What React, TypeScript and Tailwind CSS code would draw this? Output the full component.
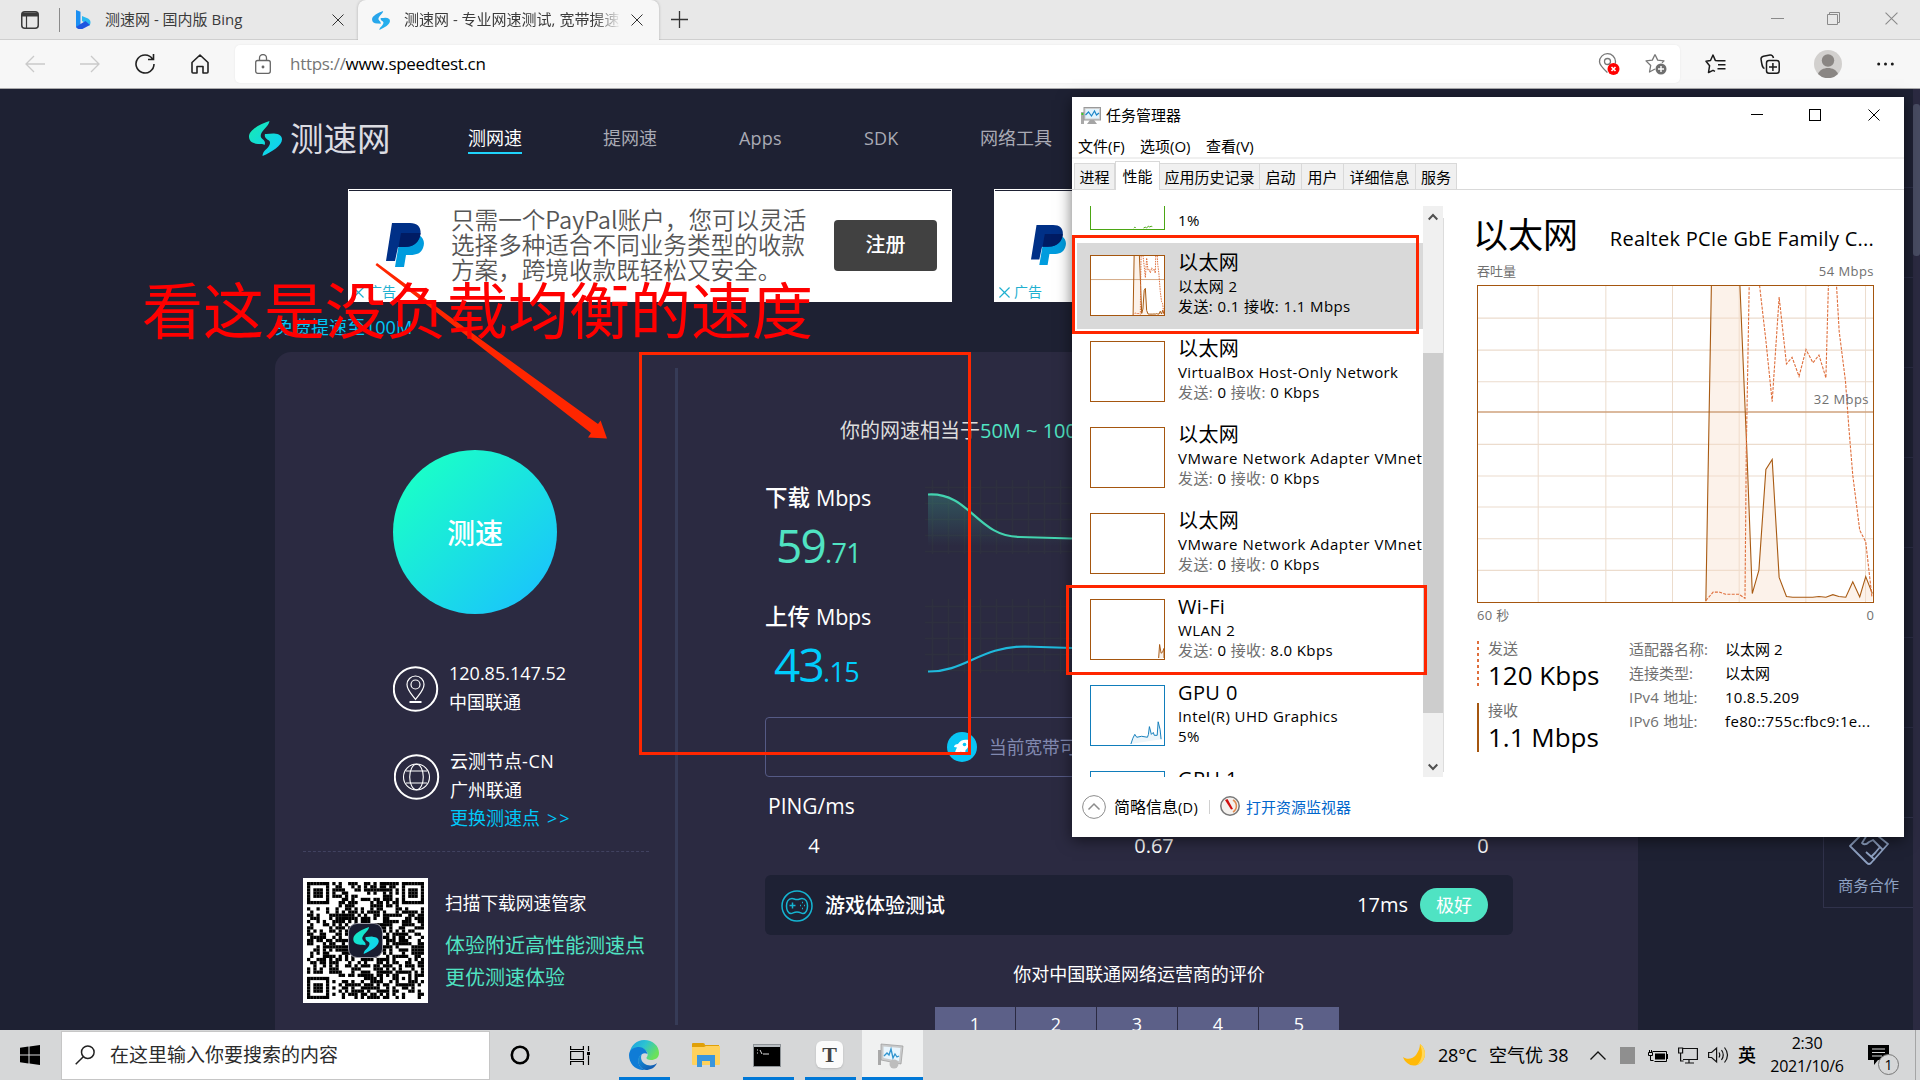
import React from "react";

/* ---------- shared drawings ---------- */

function SpeedLogo({ className, from, to, id }: { className: string; from: string; to: string; id: string }) {
  return (
    <svg className={className} viewBox="0 0 33 35">
      <defs>
        <linearGradient id={id} x1="0" y1="0" x2="1" y2="1">
          <stop offset="0" stopColor={from} />
          <stop offset="1" stopColor={to} />
        </linearGradient>
      </defs>
      <path
        fill={`url(#${id})`}
        d="M20.500 0C11 3 0 9 0 15.500c0 5 4 7 9 7.500 4 .4 5.500 0 6.500 1 1-2 .5-4-2-6-3-2.500-2-5.500 1.500-9.500C18 5 20 3.500 20.500 0zM16 13c-1 3 1 5 4 6.500 2 1.500 1 5-2 8-3 2.500-4.500 4.500-4.500 7.500C23 31 33 24.500 33 18.500c0-4-3-5.500-8-6-3-.2-6 .8-9 .5z"
      />
    </svg>
  );
}

function PayPal({ className }: { className: string }) {
  return (
    <svg className={className} viewBox="0 0 38 44" preserveAspectRatio="none">
      <path fill="#009cde" d="M33 12c5 3 6 8 4 13-2 5-6 7-13 7h-4l-2 12H9l4-24z" />
      <path fill="#003087" d="M6 0h18c9 0 12 6 10 13-2 8-8 11-16 11h-6l-3 14H0z" />
      <path fill="#001c64" d="M15 10h19.500c-.5 8-6 14-16 14h-6z" />
    </svg>
  );
}

function Cross({ className, w = 1 }: { className: string; w?: number }) {
  return (
    <svg className={className} viewBox="0 0 12 12" fill="none" stroke="currentColor" strokeWidth={w}>
      <path d="M.5.5l11 11M11.500.5l-11 11" />
    </svg>
  );
}

function MonitorIcon({ className }: { className: string }) {
  return (
    <svg className={className} viewBox="0 0 20 17">
      <rect x="0" y="5" width="3" height="12" fill="#a9a9a9" />
      <rect x="0.500" y="6" width="2" height="2" fill="#3ad01e" />
      <rect x="3" y="0.500" width="16.500" height="12.500" fill="#cfcfcf" stroke="#9a9a9a" />
      <rect x="4.500" y="2" width="13.500" height="9.500" fill="#e3f4fd" />
      <path d="M4.500 8l3-3 3 4 3-5 2 4 2.500-2" fill="none" stroke="#1c86c8" strokeWidth="1.200" />
      <path d="M9 13h4l3 4H6z" fill="#a5a5a5" />
    </svg>
  );
}

/* ---------- browser chrome ---------- */

function TabStrip() {
  return (
    <div className="flex h-10 shrink-0 items-stretch bg-[#e8e8e8] text-[15px] text-[#3b3b3b]">
      <div className="flex w-[358px] items-center border-b border-[#cfcfcf]">
        <svg className="ml-[21px] h-[18px] w-[18px]" viewBox="0 0 18 18" fill="none" stroke="#3a3a3a">
          <rect x="0.750" y="0.750" width="16.500" height="16.500" rx="3" strokeWidth="1.500" />
          <path d="M1 3.500h16" strokeWidth="4" />
          <path d="M5.500 5v12" strokeWidth="1.200" />
        </svg>
        <div className="ml-5 h-6 w-px bg-[#8a8a8a]" />
        <svg className="ml-4 h-[19px] w-[15px]" viewBox="0 0 15 19">
          <path fill="#1b8ff2" d="M0 0l4.500 1.700v13L0 17.500z" />
          <path fill="#2bb8f0" d="M6 6l6 2.500c3 1.500 3 5 1.500 7L6 11z" />
          <path fill="#1f57e0" d="M0 17l4.500-3 5-3 4.500 4-8 4.200c-3 .5-5-.5-6-2.200z" />
        </svg>
        <span className="ml-[14px] w-[227px] whitespace-pre">测速网 - 国内版 Bing</span>
        <Cross className="h-[12px] w-[12px] text-[#333]" />
      </div>
      <div className="flex w-[301px] items-center rounded-t-lg bg-[#f7f7f7] shadow-[0_0_3px_rgba(0,0,0,0.25)] [clip-path:inset(-3px_-3px_0_-3px)]">
        <SpeedLogo className="ml-[13px] h-[19px] w-[20px]" from="#2aa0ea" to="#22b4ee" id="fav" />
        <span className="mb-px ml-[13px] w-[217px] overflow-hidden whitespace-pre [mask-image:linear-gradient(to_right,#000_88%,transparent)]">
          测速网 - 专业网速测试, 宽带提速
        </span>
        <Cross className="ml-[10px] h-[12px] w-[12px] text-[#333]" />
      </div>
      <div className="flex flex-1 items-center border-b border-[#cfcfcf]">
        <svg className="ml-[12px] h-[17px] w-[17px]" viewBox="0 0 17 17" stroke="#333" strokeWidth="1.300">
          <path d="M8.500 0v17M0 8.500h17" />
        </svg>
        <div className="mb-[2px] ml-auto flex items-center pr-[22px] text-[#8a8a8a]">
          <div className="h-px w-[13px] bg-[#8a8a8a]" />
          <svg className="ml-[43px] h-[13px] w-[13px]" viewBox="0 0 13 13" fill="none" stroke="currentColor">
            <path d="M.5 2.500h10v10H.5zM2.500 2.500v-2h10v10h-2" />
          </svg>
          <Cross className="ml-[45px] h-[13px] w-[13px]" />
        </div>
      </div>
    </div>
  );
}

function Toolbar() {
  return (
    <div className="flex h-[49px] shrink-0 items-center border-b border-[#a9a9ab] bg-[#f7f7f7]">
      <svg className="ml-[25px] h-[18px] w-[20px]" viewBox="0 0 20 18" fill="none" stroke="#cacaca" strokeWidth="1.300">
        <path d="M20 9H1M9 1L1 9l8 8" />
      </svg>
      <svg className="ml-[35px] h-[18px] w-[20px]" viewBox="0 0 20 18" fill="none" stroke="#cacaca" strokeWidth="1.300">
        <path d="M0 9h19M11 1l8 8-8 8" />
      </svg>
      <svg className="ml-[35px] h-[20px] w-[20px]" viewBox="0 0 20 20" fill="none" stroke="#222" strokeWidth="1.600">
        <path d="M17.500 5A9 9 0 1 0 19 10M18.500 0v5.500H13" />
      </svg>
      <svg className="ml-[36px] h-[20px] w-[18px]" viewBox="0 0 18 20" fill="none" stroke="#222" strokeWidth="1.600" strokeLinejoin="round">
        <path d="M1 8.500L9 1l8 7.500V18a1 1 0 0 1-1 1h-4v-6.500H6V19H2a1 1 0 0 1-1-1z" />
      </svg>
      <div className="ml-[26px] flex h-[38px] w-[1445px] items-center rounded-[5px] bg-white shadow-[0_0_2px_rgba(0,0,0,0.08)]">
        <svg className="ml-[20px] h-[20px] w-[16px]" viewBox="0 0 16 20" fill="none" stroke="#666" strokeWidth="1.300">
          <rect x="0.700" y="6.500" width="14.600" height="12.800" rx="2" />
          <path d="M4.500 6.500V4a3.500 3.500 0 0 1 7 0v2.500" />
          <circle cx="8" cy="13" r="0.800" fill="#666" />
        </svg>
        <span className="ml-[19px] text-[17px] tracking-[-0.300px] text-black">
          <span className="text-[#767676]">https://</span>www.speedtest.cn
        </span>
        <svg className="ml-auto h-[22px] w-[22px]" viewBox="0 0 22 22" fill="none" stroke="#777" strokeWidth="1.300">
          <path d="M9.500 19.500C5 15.500 1.500 12.500 1.500 8.800a8 8 0 0 1 16-.2c0 .8-.1 1.500-.4 2" />
          <circle cx="9.500" cy="8.500" r="3" />
          <circle cx="15.500" cy="16" r="6" fill="#f00" stroke="none" />
          <path d="M13.500 14l4 4M17.500 14l-4 4" stroke="#fff" strokeWidth="1.600" />
        </svg>
        <svg className="mr-[13px] ml-[25px] h-[22px] w-[22px]" viewBox="0 0 22 22" fill="none" stroke="#777" strokeWidth="1.300" strokeLinejoin="round">
          <path d="M10 1.500l2.700 5.600 6.300.8-2 2M10 16l-5.500 3 1.200-6.500L1 7.900l6.300-.8L10 1.500" />
          <circle cx="16" cy="16" r="5.500" fill="#6f6f6f" stroke="none" />
          <path d="M16 13v6M13 16h6" stroke="#fff" strokeWidth="1.400" />
        </svg>
      </div>
      <svg className="ml-[25px] h-[20px] w-[21px]" viewBox="0 0 21 20" fill="none" stroke="#1a1a1a" strokeWidth="1.500" strokeLinejoin="round">
        <path d="M13 6.800l-2.700-.4L8 1 5.500 6.500 1 7.200l3.600 4.500L3.500 18.500 8 16.300l2 1M12 6.800h8.500M13 10.800h7.500M12.500 14.800h8" />
      </svg>
      <svg className="ml-[34px] h-[20px] w-[20px]" viewBox="0 0 20 20" fill="none" stroke="#1a1a1a" strokeWidth="1.500">
        <rect x="6.500" y="6.500" width="12.700" height="12.700" rx="2.500" />
        <path d="M4.500 14.500C2.500 14 2 12 1 5c0-2 1-2.500 2.500-2.800L10 1c2-.2 3 1 3.500 3M12.900 9v8M9 12.900h8" />
      </svg>
      <svg className="ml-[34px] h-[28px] w-[28px]" viewBox="0 0 28 28">
        <circle cx="14" cy="14" r="14" fill="#d2d0ce" />
        <circle cx="14" cy="10.500" r="6.200" fill="#8a8683" />
        <path d="M4 24c1.500-4 5.500-6 10-6s8.500 2 10 6a14 14 0 0 1-20 0z" fill="#8a8683" />
      </svg>
      <svg className="ml-[35px] h-[4px] w-[17px]" viewBox="0 0 17 4" fill="#1a1a1a">
        <circle cx="1.700" cy="2" r="1.500" />
        <circle cx="8.500" cy="2" r="1.500" />
        <circle cx="15.300" cy="2" r="1.500" />
      </svg>
    </div>
  );
}

/* ---------- web page ---------- */

const QR_SIZE = 37;

function qrModules(): [number, number][] {
  const cells: [number, number][] = [];
  let seed = 20211006;
  const rnd = () => {
    seed = (seed * 1103515245 + 12345) % 2147483648;
    return seed / 2147483648;
  };
  const ring = (x: number, y: number, ox: number, oy: number, n: number) => {
    const dx = x - ox;
    const dy = y - oy;
    const d = Math.max(Math.abs(dx - (n - 1) / 2), Math.abs(dy - (n - 1) / 2));
    return d === (n - 1) / 2 || d <= (n === 7 ? 1 : 0);
  };
  for (let y = 0; y < QR_SIZE; y++) {
    for (let x = 0; x < QR_SIZE; x++) {
      const r = rnd() < 0.52;
      let on = r;
      if (x < 8 && y < 8) on = x < 7 && y < 7 && ring(x, y, 0, 0, 7);
      else if (x > 28 && y < 8) on = x > 29 && y < 7 && ring(x, y, 30, 0, 7);
      else if (x < 8 && y > 28) on = x < 7 && y > 29 && ring(x, y, 0, 30, 7);
      else if (x >= 28 && x <= 32 && y >= 28 && y <= 32) on = ring(x, y, 28, 28, 5);
      if (on) cells.push([x, y]);
    }
  }
  return cells;
}

function QrCode() {
  return (
    <div className="relative flex h-[125px] w-[125px] items-center justify-center bg-white">
      <svg className="h-[117px] w-[117px]" viewBox="0 0 37 37">
        {qrModules().map(([x, y]) => (
          <rect key={`${x}-${y}`} x={x} y={y} width="1.030" height="1.030" fill="#000" />
        ))}
      </svg>
      <div className="absolute top-[45px] left-[45px] flex h-[35px] w-[35px] items-center justify-center rounded-[9px] border border-[#9a9aa5] bg-[#1a1d31]">
        <SpeedLogo className="h-[27px] w-[26px]" from="#15ecb8" to="#0fd0fb" id="qrlogo" />
      </div>
    </div>
  );
}

function Ad({ small = false }: { small?: boolean }) {
  return (
    <div className="flex h-[113px] w-[604px] border border-white bg-white shadow-[inset_0_1px_0_#1e2133]">
      <div className="flex w-[102px] flex-col">
        <div className="mt-[33px] flex h-[44px] w-[75px] items-center justify-end">
          <PayPal className={small ? "mr-[4px] h-[40px] w-[35px]" : "h-[44px] w-[38px]"} />
        </div>
        <div className="mt-[17px] flex items-center text-[14px] leading-[16px] text-[#1fb0d0]">
          <Cross className="mr-[4px] ml-[4px] h-[11px] w-[11px]" w={1.3} />
          广告
        </div>
      </div>
      <div className="mt-[17px] w-[383px] font-['Noto_Sans_CJK_SC',sans-serif] text-[23.600px] leading-[25.200px] font-[350] whitespace-pre text-[#555]">
        <div>只需一个PayPal账户，您可以灵活</div>
        <div>选择多种适合不同业务类型的收款</div>
        <div>方案，跨境收款既轻松又安全。</div>
      </div>
      <div className="mt-[30px] flex h-[51px] w-[103px] items-center justify-center rounded-[4px] bg-[#414141] pb-px text-[20px] font-medium text-white">
        注册
      </div>
    </div>
  );
}

function SpeedChart({ up }: { up: boolean }) {
  const color = up ? "#1fb9dc" : "#43d3b0";
  const line = up
    ? "M3 72.500C40 73 55 47.500 100 47.500L147 49"
    : "M3 14.500C45 12 52 57 95 57L147 58.500";
  return (
    <svg className="-mt-[4px] h-[75px] w-[147px]" viewBox="0 0 147 75" fill="none">
      <defs>
        <linearGradient id={up ? "gu" : "gd"} x1="0" y1="0" x2="0" y2="1">
          <stop offset="0" stopColor={color} stopOpacity="0.250" />
          <stop offset="1" stopColor={color} stopOpacity="0" />
        </linearGradient>
      </defs>
      <path
        stroke="#2e303f"
        strokeWidth="1.500"
        d="M0 7.500h147M0 23.500h147M0 39.500h147M0 55.500h147M0 71.500h147M7.500 0v74M23.500 0v74M39.500 0v74M55.500 0v74M71.500 0v74M87.500 0v74M103.500 0v74M119.500 0v74M135.500 0v74"
      />
      {!up && <path d={`${line}V66H3z`} fill="url(#gd)" />}
      <path d={line} stroke={color} strokeWidth="2.200" />
    </svg>
  );
}

function SpeedBlock({ label, whole, frac, up }: { label: string; whole: string; frac: string; up: boolean }) {
  return (
    <div className="flex h-[119px]">
      <div className="w-[160px]">
        <div className="flex h-[28px] items-center text-[22.500px] font-medium text-white">
          {label}
          <span className="ml-[6px] text-[21.500px] tracking-[-0.200px]">Mbps</span>
        </div>
        <div className={up ? "pl-[9px] text-[#00cdfc]" : "pl-[11px] text-[#50e3c2]"}>
          <span className="text-[46px] leading-[67px] tracking-[-1.800px]">{whole}</span>
          <span className="text-[27px] tracking-[-0.700px]">.{frac}</span>
        </div>
      </div>
      <SpeedChart up={up} />
    </div>
  );
}

function LeftColumn() {
  return (
    <div className="w-[400px]">
      <div className="mt-[98px] ml-[118px] flex h-[164px] w-[164px] items-center justify-center rounded-full bg-[linear-gradient(135deg,#1affc8_12%,#1ac6fa_88%)] pt-0.5 text-[28px] font-medium text-white">
        测速
      </div>
      <div className="mt-[45px] ml-[118px] flex text-[18px] leading-[28.500px] text-white">
        <svg className="mt-[7px] h-[46px] w-[46px]" viewBox="0 0 46 46" fill="none" stroke="#fff" strokeWidth="1.200">
          <circle cx="22.500" cy="23" r="21.700" strokeWidth="2" />
          <path d="M22.500 33.500c-4-5.500-8.500-9.500-8.500-15a8.500 8.500 0 0 1 17 0c0 5.500-4.500 9.500-8.500 15z" />
          <circle cx="22.500" cy="18.500" r="4.500" />
          <path d="M16.500 36h12" strokeWidth="2" />
        </svg>
        <div className="ml-[10px]">
          <div>120.85.147.52</div>
          <div>中国联通</div>
        </div>
      </div>
      <div className="mt-[31px] ml-[119px] flex text-[18px] leading-[28.500px] text-white">
        <svg className="mt-[7px] h-[46px] w-[46px]" viewBox="0 0 46 46" fill="none" stroke="#fff" strokeWidth="1.100">
          <circle cx="22.500" cy="23" r="21.700" strokeWidth="2" />
          <circle cx="22.500" cy="23" r="13" />
          <ellipse cx="22.500" cy="23" rx="6.800" ry="12.800" />
          <path d="M12 17h21M12 29h21" />
        </svg>
        <div className="ml-[10px]">
          <div>
            云测节点<span className="tracking-[0.600px]">-CN</span>
          </div>
          <div>广州联通</div>
          <div className="text-[#00c8f8]">
            更换测速点<span className="ml-[7px] tracking-[2px]">&gt;&gt;</span>
          </div>
        </div>
      </div>
      <div className="mt-[18px] ml-[28px] w-[346px] border-t border-dashed border-[#414260]" />
      <div className="mt-[26px] ml-[28px] flex">
        <QrCode />
        <div className="ml-[17px] text-[20px] text-[#50e3c2]">
          <div className="mt-[12px] text-[17.700px] leading-[26px] text-white">扫描下载网速管家</div>
          <div className="mt-[14px] leading-[32px]">
            体验附近高性能测速点
            <br />
            更优测速体验
          </div>
        </div>
      </div>
    </div>
  );
}

function RightColumn() {
  return (
    <div className="ml-[87px] w-[748px]">
      <div className="mt-[65px] pl-[75px] text-[20px] leading-[28px] whitespace-pre text-[#ddd]">
        你的网速相当于<span className="font-medium text-[#50e3c2]">50M ~ 100M宽带</span>
      </div>
      <div className="mt-[39px]">
        <SpeedBlock label="下载" whole="59" frac="71" up={false} />
        <SpeedBlock label="上传" whole="43" frac="15" up />
      </div>
      <div className="-mt-[5px] flex h-[60px] items-center rounded-[4px] border border-[#555a85] text-[17.700px] text-[#8189b0]">
        <svg className="mr-[12px] ml-[181px] h-[30px] w-[30px]" viewBox="0 0 30 30">
          <circle cx="15" cy="15" r="15" fill="#09c5f4" />
          <path
            fill="#fff"
            d="M22 8c-5-1-9 0-11 4-2 0-4 1-4 3l3 .5c-1 2-2 4-2 6 2 0 4-.5 6-2l2 2.500c2-.5 2.500-2 2.500-4 3-2 4-6 3.500-10z"
          />
          <circle cx="17.500" cy="12.500" r="1.800" fill="#09c5f4" />
        </svg>
        当前宽带可提速至100M
      </div>
      <div className="mt-[15px] pl-[3px] text-[21px] leading-[28px] font-medium text-white">PING/ms</div>
      <div className="mt-[12px] flex text-[20px] leading-[28px] font-medium text-white">
        <div className="w-[98px] shrink-0 text-center">4</div>
        <div className="ml-[242px] w-[98px] shrink-0 text-center">0.67</div>
        <div className="ml-[231px] w-[98px] shrink-0 text-center">0</div>
      </div>
      <div className="mt-[15px] flex h-[60px] items-center rounded-[6px] bg-[#1e2134] text-[20px] font-medium text-white">
        <svg className="mt-px ml-[16px] h-[32px] w-[32px]" viewBox="0 0 32 32" fill="none" stroke="#15b5d2" strokeWidth="1.500">
          <circle cx="16" cy="16" r="15" />
          <path d="M11 8.500c-4 0-5.500 4-5.500 7.500s1.500 7.500 4.500 7.500c2 0 2.500-1.500 6-1.500s4 1.500 6 1.500c3 0 4.500-4 4.500-7.500S25 8.500 21 8.500c-2 0-2.500 1-5 1s-3-1-5-1z" />
          <path d="M8.500 15.500h6M11.500 12.500v6M19 15.500h1M23 15.500h1M21 12.500h1M21 18.500h1" />
        </svg>
        <span className="mt-[2px] ml-[12px]">游戏体验测试</span>
        <span className="mr-[12px] ml-auto">17ms</span>
        <div className="mr-[25px] flex h-[34px] w-[68px] items-center justify-center rounded-full bg-[#4fe3c3] text-[18px] font-normal">
          极好
        </div>
      </div>
      <div className="mt-[25px] text-center text-[18px] leading-[28px] tracking-[-0.050px] text-white">你对中国联通网络运营商的评价</div>
      <div className="mt-[19px] ml-[170px] flex gap-px text-[18px] text-white">
        {[1, 2, 3, 4, 5].map((n) => (
          <div key={n} className="flex h-[36px] w-[80px] justify-center bg-[#5c6088] pt-[4px]">
            {n}
          </div>
        ))}
      </div>
    </div>
  );
}

function WebPage() {
  return (
    <div className="relative flex h-[941px] shrink-0 overflow-hidden bg-[#1e2133]">
      <div className="w-[1823px]">
        <div className="flex h-[100px] items-center pb-[2px] pl-[249px] text-[18px] text-[#a9aab4]">
          <SpeedLogo className="h-[35px] w-[33px]" from="#17ecb0" to="#0ccbff" id="brand" />
          <span className="ml-[8px] w-[178px] text-[33.500px] text-[#dcdce2]">测速网</span>
          <span className="mt-[2px] w-[54px] border-b-[2px] border-[#1fd3fb] leading-[27px] text-white">测网速</span>
          <span className="ml-[81px]">提网速</span>
          <span className="ml-[82px] w-[43px] tracking-[0.200px]">Apps</span>
          <span className="ml-[82px] w-[35px] tracking-[0.200px]">SDK</span>
          <span className="ml-[81px]">网络工具</span>
        </div>
        <div className="flex pl-[348px]">
          <Ad />
          <div className="ml-[42px] h-[113px] overflow-hidden">
            <Ad small />
          </div>
        </div>
        <div className="mt-[11px] flex h-[28px] items-center pl-[275px] text-[18px] text-[#00c8f8]">免费提速至100M</div>
        <div className="mt-[11px] ml-[275px] flex h-[700px] w-[1363px] rounded-t-[16px] bg-[#2b2a41]">
          <LeftColumn />
          <div className="mt-[16px] h-[657px] w-[3px] bg-[#363b57]" />
          <RightColumn />
        </div>
      </div>
      <div className="w-[90px] pt-[98px]">
        {[0, 1, 2, 3, 4, 5, 6].map((i) => (
          <div key={i} className="h-[90px] border-t border-l border-[#2a2c44]" />
        ))}
        <div className="flex h-[91px] flex-col items-center border-y border-l border-[#30324b] text-[15.300px] text-[#8ea1c2]">
          <svg className="mt-[8px] h-[40px] w-[42px]" viewBox="0 0 42 40" fill="none" stroke="#8ea1c2" strokeWidth="1.800" strokeLinejoin="round">
            <path d="M2 20L20 2l20 16-17 19q-2 2-4 0zM19 9l-5 8q3 3 7-1l4-2 10 10M23 31l5-5M27 34l-9-8M32 21l-5 6" />
          </svg>
          <span className="mt-[8px]">商务合作</span>
        </div>
      </div>
      <div className="w-[7px] bg-[#2b2a41] pt-[15px]">
        <div className="h-[152px] rounded-[3px] bg-[#484c62]" />
      </div>
    </div>
  );
}

/* ---------- task manager ---------- */

type Item = { name: string; sub?: string; rate?: [string, string]; note?: string; color: "g" | "o" | "b"; spark?: string; selected?: boolean };

const ITEMS: Item[] = [
  { name: "磁盘 1", sub: "SSD", note: "1%", color: "g", spark: "M44 60l1-1 1 1M54 60l2-1 1 1 2-2 1 1 2-1 1 1" },
  { name: "以太网", sub: "以太网 2", rate: ["0.1", "1.1 Mbps"], color: "o", selected: true },
  { name: "以太网", sub: "VirtualBox Host-Only Network", rate: ["0", "0 Kbps"], color: "o" },
  { name: "以太网", sub: "VMware Network Adapter VMnet", rate: ["0", "0 Kbps"], color: "o" },
  { name: "以太网", sub: "VMware Network Adapter VMnet", rate: ["0", "0 Kbps"], color: "o" },
  { name: "Wi-Fi", sub: "WLAN 2", rate: ["0", "8.0 Kbps"], color: "o", spark: "M69.500 60l1-14 1.500 9 1.500-1 1.500-4v10" },
  { name: "GPU 0", sub: "Intel(R) UHD Graphics", note: "5%", color: "b", spark: "M41 60l2-6 2-4 2 3 5-1 6 1 1-3 1-8 2 8 2-2 1 3h3l1-14 2 8 1 10" },
  { name: "GPU 1", sub: "NVIDIA GeForce", note: "0%", color: "b" },
];

const RECV =
  "M798 1115L815 240H900L921 690L938 1094L958 1030L979 756L998 729L1019 1050L1041 1102L1060 1104H1120L1139 1102L1160 1104L1181 1097L1199 1102L1220 1104L1241 1062L1262 1103L1280 1048L1300 1094";
const SEND =
  "M798 1113L820 1090H838L858 1096H898L916 1107L920 700L929 240H958L979 405L998 572L1019 287L1041 469L1058 451L1079 503L1100 430L1121 466L1139 445L1160 507L1168 240H1191L1200 380L1219 516L1229 640L1241 772L1262 922L1280 953L1299 1105";

function ThroughputPlot({ className, mini = false }: { className: string; mini?: boolean }) {
  return (
    <svg className={className} viewBox="111 257 1191 860" preserveAspectRatio="none" fill="none">
      <rect x="111" y="257" width="1191" height="860" fill="#fff" />
      {!mini && (
        <path
          stroke="#ecdccd"
          strokeWidth="3"
          d="M111 344.500h1191M111 431.500h1191M111 517.500h1191M111 688h1191M111 774h1191M111 858.500h1191M111 945h1191M111 1031h1191M292.500 257v860M496.500 257v860M697.500 257v860M898.500 257v860M1099.500 257v860M1279.500 257v860"
        />
      )}
      <path d={`${RECV}V1115z`} fill="#f7dfca" fillOpacity="0.400" />
      <path d="M111 600h1191" stroke="#cfa27c" strokeWidth={mini ? 14 : 4} />
      <g strokeWidth={mini ? 1 : 1.1}>
        <path d={RECV} stroke="#a85a12" vectorEffect="non-scaling-stroke" />
        <path d={SEND} stroke="#df6f3c" strokeDasharray={mini ? "1.500 1" : "3 1.300"} vectorEffect="non-scaling-stroke" />
      </g>
    </svg>
  );
}

function Thumb({ item }: { item: Item }) {
  const border =
    item.color === "g" ? "border-[#4ba614]" : item.color === "o" ? "border-[#a5560f]" : "border-[#117dbb]";
  const stroke = item.color === "g" ? "#4ba614" : item.color === "o" ? "#a5560f" : "#117dbb";
  return (
    <div className={`h-[61px] w-[75px] shrink-0 border bg-white ${border}`}>
      {item.selected ? (
        <ThroughputPlot className="h-full w-full" mini />
      ) : (
        item.spark && (
          <svg className="h-full w-full" viewBox="0 0 75 61" preserveAspectRatio="none">
            <path d={item.spark} fill={stroke} fillOpacity="0.080" stroke={stroke} strokeWidth="1" />
          </svg>
        )
      )}
    </div>
  );
}

function TaskManager() {
  return (
    <div className="absolute top-[97px] left-[1072px] flex h-[740px] w-[832px] flex-col bg-white text-[15px] text-black shadow-[0_3px_14px_rgba(0,0,0,0.55)]">
      <div className="flex h-[37px] shrink-0 items-center pl-[9px]">
        <MonitorIcon className="h-[17px] w-[20px]" />
        <span className="ml-[5px]">任务管理器</span>
        <div className="mr-[24px] mb-[2px] ml-auto flex items-center">
          <div className="mb-px h-px w-[12px] bg-black" />
          <div className="ml-[46px] h-[12px] w-[12px] border border-black" />
          <Cross className="ml-[47px] h-[12px] w-[12px]" />
        </div>
      </div>
      <div className="flex h-[25px] shrink-0 items-center border-b-2 border-[#f0f0f0] pt-px pl-[6px] whitespace-nowrap">
        <span className="w-[62px]">文件(F)</span>
        <span className="w-[66px]">选项(O)</span>
        <span>查看(V)</span>
      </div>
      <div className="flex h-[31px] shrink-0 items-end border-b border-[#d9d9d9] pl-[2px] whitespace-nowrap">
        <div className="flex h-[26px] w-[41px] items-center justify-center border border-b-0 border-[#d9d9d9] bg-[#f0f0f0] pt-px">进程</div>
        <div className="-mb-px flex h-[29px] w-[45px] items-center justify-center border border-b-0 border-[#d9d9d9] bg-white">性能</div>
        <div className="flex h-[26px] w-[100px] items-center justify-center border border-b-0 border-l-0 border-[#d9d9d9] bg-[#f0f0f0] pt-px">应用历史记录</div>
        <div className="flex h-[26px] w-[42px] items-center justify-center border border-b-0 border-l-0 border-[#d9d9d9] bg-[#f0f0f0] pt-px">启动</div>
        <div className="flex h-[26px] w-[42px] items-center justify-center border border-b-0 border-l-0 border-[#d9d9d9] bg-[#f0f0f0] pt-px">用户</div>
        <div className="flex h-[26px] w-[72px] items-center justify-center border border-b-0 border-l-0 border-[#d9d9d9] bg-[#f0f0f0] pt-px">详细信息</div>
        <div className="flex h-[26px] w-[41px] items-center justify-center border border-b-0 border-l-0 border-[#d9d9d9] bg-[#f0f0f0] pt-px">服务</div>
      </div>
      <div className="flex h-[587px] shrink-0 pt-[16px]">
        <div className="h-[571px] w-[351px] overflow-hidden pl-[5px]">
          <div className="-mt-[49px]">
            {ITEMS.map((it, i) => (
              <div
                key={i}
                className={it.selected ? "flex h-[86px] w-[346px] overflow-hidden bg-[#d9d9d9] pt-[12px] pl-[13px]" : "flex h-[86px] w-[346px] overflow-hidden pt-[12px] pl-[13px]"}
              >
                <Thumb item={it} />
                <div className="-mt-[5px] ml-[13px] tracking-[0.400px] whitespace-nowrap">
                  <div className="text-[20px] leading-[26px]">{it.name}</div>
                  <div className={it.sub && it.sub.startsWith("VMware") ? "leading-[20px] tracking-[0.520px]" : "leading-[20px]"}>{it.sub}</div>
                  <div className="leading-[21px]">
                    {it.rate ? (
                      <>
                        <span className={it.selected ? "text-black" : "text-[#707070]"}>发送: </span>
                        {it.rate[0]} <span className={it.selected ? "text-black" : "text-[#707070]"}>接收: </span>
                        {it.rate[1]}
                      </>
                    ) : (
                      it.note
                    )}
                  </div>
                </div>
              </div>
            ))}
          </div>
        </div>
        <div className="flex h-[571px] w-[20px] flex-col items-center bg-[#f0f0f0]">
          <svg className="mt-[7px] h-[8px] w-[10px]" viewBox="0 0 10 8" fill="none" stroke="#505050" strokeWidth="2">
            <path d="M.7 6.500L5 2l4.300 4.500" />
          </svg>
          <div className="mt-[132px] h-[360px] w-full bg-[#cdcdcd]" />
          <svg className="mt-auto mb-[6px] h-[8px] w-[10px]" viewBox="0 0 10 8" fill="none" stroke="#505050" strokeWidth="2">
            <path d="M.7 1.500L5 6l4.300-4.500" />
          </svg>
        </div>
        <div className="mt-[12px] h-[554px] w-px bg-[#dcdcdc]" />
        <div className="ml-[33px] w-[397px]">
          <div className="flex h-[55px] items-center pt-[3px] whitespace-nowrap">
            <span className="-ml-[4px] text-[35px] leading-[46px]">以太网</span>
            <span className="mt-[8px] ml-auto text-[20px] tracking-[0.250px]">Realtek PCIe GbE Family C...</span>
          </div>
          <div className="flex h-[24px] items-center justify-between pb-[2px] text-[13px] text-[#707070]">
            <span>吞吐量</span>
            <span className="tracking-[0.450px]">54 Mbps</span>
          </div>
          <div className="relative h-[318px] border border-[#a5560f]">
            <ThroughputPlot className="h-full w-full" />
            <span className="absolute top-[103px] right-[4px] text-[13px] leading-[20px] tracking-[0.450px] text-[#707070]">32 Mbps</span>
          </div>
          <div className="flex h-[26px] items-center justify-between text-[13px] text-[#707070]">
            <span className="tracking-[0.300px]">60 秒</span>
            <span>0</span>
          </div>
          <div className="mt-[8px] flex">
            <div className="w-[152px]">
              <div className="flex h-[62px]">
                <div className="mt-[4px] h-[45px] w-[2px] bg-[repeating-linear-gradient(to_bottom,#df6f3c_0_3px,transparent_3px_6px)]" />
                <div className="ml-[9px] whitespace-nowrap">
                  <div className="leading-[23px] text-[#707070]">发送</div>
                  <div className="text-[26px] leading-[30px]">120 Kbps</div>
                </div>
              </div>
              <div className="flex h-[62px]">
                <div className="mt-[4px] h-[49px] w-[2px] bg-[#a5560f]" />
                <div className="ml-[9px] whitespace-nowrap">
                  <div className="leading-[23px] text-[#707070]">接收</div>
                  <div className="text-[26px] leading-[30px]">1.1 Mbps</div>
                </div>
              </div>
            </div>
            <div className="w-[96px] leading-[24px] whitespace-nowrap text-[#707070]">
              <div>适配器名称:</div>
              <div>连接类型:</div>
              <div className="tracking-[0.200px]">IPv4 地址:</div>
              <div className="tracking-[0.200px]">IPv6 地址:</div>
            </div>
            <div className="leading-[24px] whitespace-nowrap">
              <div>以太网 2</div>
              <div>以太网</div>
              <div className="tracking-[0.250px]">10.8.5.209</div>
              <div className="tracking-[0.350px]">fe80::755c:fbc9:1e...</div>
            </div>
          </div>
        </div>
      </div>
      <div className="flex h-[60px] items-center pl-[10px]">
        <svg className="h-[24px] w-[24px]" viewBox="0 0 24 24" fill="none" stroke="#8c8c8c">
          <circle cx="12" cy="12" r="11.400" />
          <path d="M6.500 14.500L12 9l5.500 5.500" strokeWidth="1.500" />
        </svg>
        <span className="ml-[8px] w-[95px] text-[16px] whitespace-nowrap">
          简略信息<span className="text-[14.500px] tracking-[0.300px]">(D)</span>
        </span>
        <div className="h-[14px] w-px bg-[#d0d0d0]" />
        <svg className="mb-[2px] ml-[10px] h-[20px] w-[20px]" viewBox="0 0 20 20">
          <circle cx="10" cy="10" r="9.200" fill="#f4f1ee" stroke="#777" strokeWidth="1.500" />
          <path d="M13 4a7 7 0 0 1 0 12" fill="none" stroke="#e08a50" strokeWidth="1.500" />
          <path d="M5 4l2.500-1 5.500 10-2 .5z" fill="#d01010" />
        </svg>
        <span className="ml-[6px] text-[#0066cc]">打开资源监视器</span>
      </div>
    </div>
  );
}

/* ---------- red annotations drawn over the desktop ---------- */

function Annotations() {
  return (
    <>
      <div className="absolute top-[352px] left-[639px] h-[403px] w-[332px] border-[3px] border-[#ff2600]" />
      <div className="absolute top-[235px] left-[1072px] h-[99px] w-[347px] border-[3px] border-[#ff2600]" />
      <div className="absolute top-[585px] left-[1066px] h-[90px] w-[361px] border-[3px] border-[#ff2600]" />
      <svg className="absolute top-[260px] left-[370px] h-[185px] w-[245px]" viewBox="370 260 245 185">
        <path d="M377 263L483 341L598 424L600.600 420.500L607 438.500L588 437.500L591 433L472 340L375.500 265z" fill="#ff2600" />
      </svg>
      <div className="absolute top-[264px] left-[142px] font-['Noto_Sans_CJK_SC',sans-serif] text-[61px] leading-[88px] whitespace-nowrap text-[#ff0000]">
        看这是没负载均衡的速度
      </div>
    </>
  );
}

/* ---------- taskbar ---------- */

function Taskbar() {
  return (
    <div className="flex h-[50px] shrink-0 items-center bg-[#d6d7d8] text-[18px] text-black">
      <svg className="ml-[20px] h-[20px] w-[20px]" viewBox="0 0 20 20">
        <path d="M0 2.800l8.500-1.200v8H0zM9.500 1.500L20 0v9.600H9.500zM0 10.500h8.500v8L0 17.300zM9.500 10.500H20V20L9.500 18.600z" />
      </svg>
      <div className="ml-[21px] flex h-[49px] w-[429px] items-center border border-[#c6c6c6] bg-white text-[19px] text-[#2b2b2b]">
        <svg className="ml-[13px] h-[20px] w-[20px]" viewBox="0 0 20 20" fill="none" stroke="#222" strokeWidth="1.500">
          <circle cx="12.800" cy="7.200" r="6.300" />
          <path d="M8.300 11.700L.7 19.300" />
        </svg>
        <span className="ml-[15px]">在这里输入你要搜索的内容</span>
      </div>
      <svg className="ml-[20px] h-[20px] w-[20px]" viewBox="0 0 20 20" fill="none" stroke="#000" strokeWidth="2.600">
        <circle cx="10" cy="10" r="8.200" />
      </svg>
      <svg className="ml-[40px] h-[19px] w-[21px]" viewBox="0 0 21 19" fill="none" stroke="#000" strokeWidth="1.200">
        <path d="M.6 0v3.500h12.800V0M.6 19v-3.500h12.800V19M.6 5.500h12.800v8H.6zM18.500 0v5M18.500 9.500V19" />
        <rect x="17" y="6" width="3" height="3" fill="#000" stroke="none" />
      </svg>
      <div className="ml-[28px] flex h-full w-[51px] flex-col items-center border-b-[3px] border-[#0078d7]">
        <svg className="mt-[10px] mr-[2px] h-[30px] w-[30px]" viewBox="0 0 30 30">
          <defs>
            <linearGradient id="edgeTop" x1="0" y1="0" x2="1" y2="0.500">
              <stop offset="0" stopColor="#1b9de2" />
              <stop offset="0.500" stopColor="#2cc3d2" />
              <stop offset="1" stopColor="#6be15a" />
            </linearGradient>
            <linearGradient id="edgeLow" x1="0" y1="0" x2="1" y2="1">
              <stop offset="0" stopColor="#1798e0" />
              <stop offset="1" stopColor="#0f4fa8" />
            </linearGradient>
          </defs>
          <path fill="url(#edgeTop)" d="M1 12C2 5 8 0 15 0c9 0 15 6 15 13 0 5-4 7-8 7-3 0-5-1-4.500-2.500C19 16 19 14 18 12c-3-5-12-6-17 0z" />
          <path fill="#0f7cd6" d="M0 15C0 9 6 7 10 7c5 0 8 4 8.500 7-3-2-7 0-8.500 4-2 6 2 11 7 12C8 31 0 25 0 15z" />
          <path fill="url(#edgeLow)" d="M13 14c-2 3-1 9 5 11 4 1 8 0 10-2-2 5-7 7-11 7C11 29 8 23 9.500 18c.8-2 2-3.300 3.500-4z" />
        </svg>
      </div>
      <svg className="ml-[22px] h-[24px] w-[28px]" viewBox="0 0 28 24">
        <path fill="#e0a008" d="M0 1q0-1 1-1h10q2 0 2 2h14v5H0z" />
        <path fill="#ffd15c" d="M0 4h12l2-1h14v18q0 1-1 1H1q-1 0-1-1z" />
        <path fill="#3a96dd" d="M5 12h18v12h-5v-6h-8v6H5z" />
      </svg>
      <div className="ml-[23px] flex h-full w-[51px] flex-col items-center border-b-[3px] border-[#0078d7]">
        <svg className="mt-[14px] mr-[3px] h-[23px] w-[28px]" viewBox="0 0 28 23">
          <rect x="0.500" y="0.500" width="27" height="22" fill="#000" stroke="#8d9296" />
          <rect x="1" y="1" width="26" height="2" fill="#b9bec2" />
          <path d="M4 6h1M4 9h1M7 6l2 4M10 10h6" stroke="#ddd" />
        </svg>
      </div>
      <div className="ml-[11px] flex h-full w-[51px] flex-col items-center border-b-[3px] border-[#0078d7]">
        <div className="mt-[11px] mr-[2px] flex h-[27px] w-[27px] items-center justify-center rounded-[6px] bg-[#fbfbfb] font-['Liberation_Serif',serif] text-[22px] font-bold text-[#444] shadow-[0_1px_2px_rgba(0,0,0,0.15)]">
          T
        </div>
      </div>
      <div className="ml-[6px] flex h-full w-[61px] flex-col items-center border-b-[3px] border-[#0078d7] bg-[#f0f1f1]">
        <svg className="mt-[13px] mr-[3px] h-[26px] w-[28px]" viewBox="0 0 28 26">
          <path d="M1 7h3v15H1z" fill="#a9a9a9" />
          <path d="M4 1l22 2-2 18-20-4z" fill="#c9cacb" stroke="#999" strokeWidth="0.700" />
          <path d="M6.500 3.500l17 1.500-1.500 13-15.500-3z" fill="#e8f5fd" />
          <path d="M7 13l3-3 2 2 2-6 2 9 2-4 2 3 2-1" fill="none" stroke="#2f94cf" strokeWidth="1.300" />
          <circle cx="17" cy="21" r="4.500" fill="#bdbdbd" />
        </svg>
      </div>
      <svg className="ml-[480px] h-[22px] w-[25px]" viewBox="0 0 25 22">
        <path d="M17 0c8 6 6 18-3 21C8 23 2 19 0 13c4 3 10 2 13-2 2-3 4-7 4-11z" fill="#ffb908" />
        <path d="M17 0c8 6 6 18-3 21C20 15 20 8 17 0z" fill="#ffd75a" />
      </svg>
      <span className="ml-[10px] w-[51px] tracking-[-0.200px]">28°C</span>
      <span className="w-[59px]">空气优</span>
      <span className="w-[42px]">38</span>
      <svg className="h-[9px] w-[16px]" viewBox="0 0 16 9" fill="none" stroke="#111" strokeWidth="1.300">
        <path d="M.5 8.500L8 1l7.500 7.500" />
      </svg>
      <div className="ml-[14px] h-[17px] w-[15px] bg-[#8f8f8f]" />
      <svg className="ml-[13px] h-[13px] w-[20px]" viewBox="0 0 20 13">
        <path d="M7 4.500h10v6H7z" fill="#000" />
        <path d="M4.500 2.500h14v10h-12M19.500 5v5M.5 3.500h4v3h-4zM1.500 1v2.500M3.500 1v2.500M2.500 6.500v5h3" fill="none" stroke="#000" />
      </svg>
      <svg className="ml-[10px] h-[17px] w-[20px]" viewBox="0 0 20 17" fill="none" stroke="#111" strokeWidth="1.200">
        <path d="M5 1.500h14.400v11H5M11 12.500v3M7 16h9M.6 1h4v5h-4zM2.600 6v8h3" />
      </svg>
      <svg className="ml-[10px] h-[18px] w-[21px]" viewBox="0 0 21 18" fill="none" stroke="#111" strokeWidth="1.200">
        <path d="M.6 6.500h3l5-4.500v14l-5-4.500h-3zM11 6.500q1.500 2.500 0 5M13.500 4q3.500 5 0 10M16.500 1.500q6 7.500 0 15" />
      </svg>
      <span className="ml-[9px] font-medium">英</span>
      <div className="ml-[8px] w-[86px] text-center text-[16px] leading-[23px] tracking-[-0.250px]">
        <div>2:30</div>
        <div>2021/10/6</div>
      </div>
      <div className="relative ml-[18px] h-[50px] w-[40px]">
        <svg className="mt-[14px] h-[22px] w-[22px]" viewBox="0 0 22 22">
          <path d="M0 1h21v15H10l-4 5v-5H0z" fill="#000" />
          <path d="M4 5h13M4 8.500h13M4 12h10" stroke="#d6d7d8" strokeWidth="1.200" />
        </svg>
        <div className="absolute top-[24px] left-[10px] flex h-[21px] w-[21px] items-center justify-center rounded-full border border-[#777] bg-[#d6d7d8] text-[14px]">
          1
        </div>
      </div>
      <div className="ml-auto h-full w-[5px] border-l border-[#a5a5a5]" />
    </div>
  );
}

export default function App() {
  return (
    <div className="relative flex h-[1080px] w-[1920px] flex-col overflow-hidden bg-[#1e2133] font-['Open_Sans','Noto_Sans_CJK_SC',sans-serif]">
      <TabStrip />
      <Toolbar />
      <WebPage />
      <Taskbar />
      <TaskManager />
      <Annotations />
    </div>
  );
}
